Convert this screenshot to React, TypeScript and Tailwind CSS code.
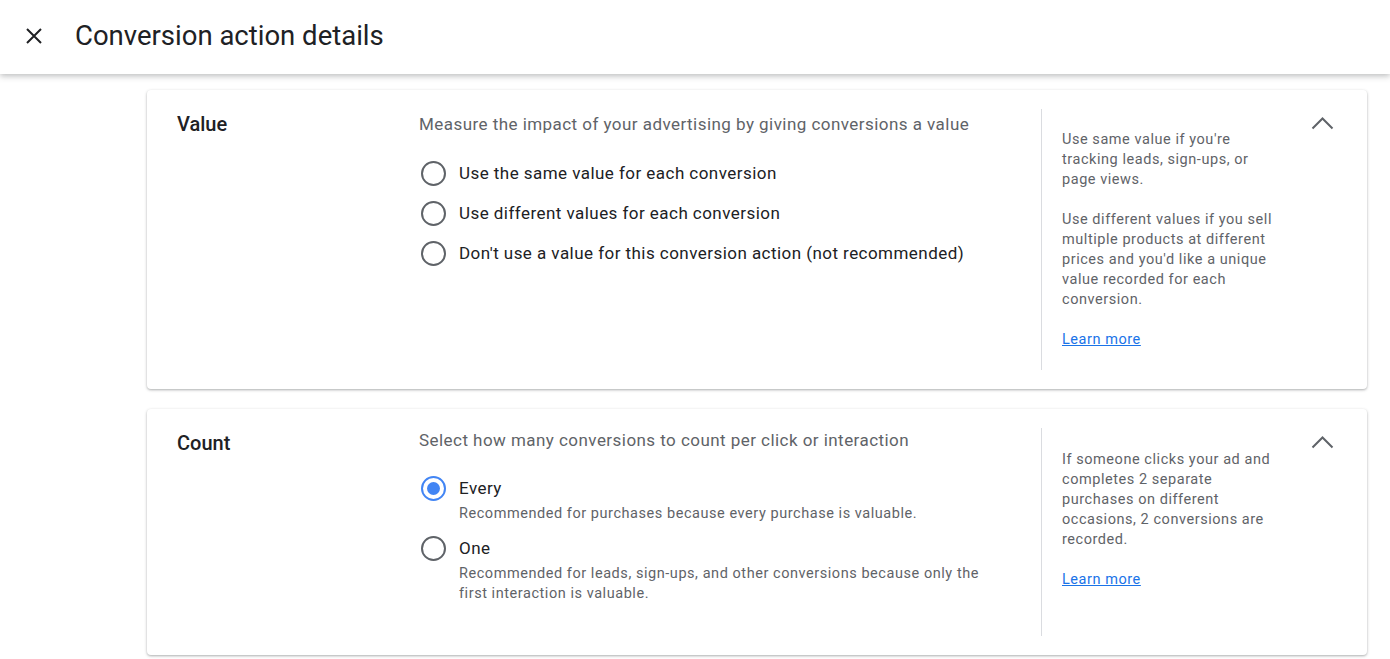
import React, { useState } from 'react';

const Radio: React.FC<{ checked?: boolean }> = ({ checked }) => (
  <span
    className={`ml-[2px] flex h-[25px] w-[25px] shrink-0 items-center justify-center rounded-full border-2 ${
      checked ? 'border-[#4285f4]' : 'border-[#5f6368]'
    }`}
  >
    {checked && <span className="h-[13px] w-[13px] rounded-full bg-[#4285f4]" />}
  </span>
);

const Chevron = () => (
  <svg width="23" height="14" viewBox="0 0 23 14" className="text-[#5f6368]">
    <path d="M1.5 12.5 11.5 2.5l10 10" fill="none" stroke="currentColor" strokeWidth="2" />
  </svg>
);

type Option = { label: string; sub?: string[] };

const Section: React.FC<{
  title: string;
  description: string;
  options: Option[];
  selected: number;
  help: string[];
  height: string;
  compact?: boolean;
}> = ({ title, description, options, selected, help, height, compact }) => {
  const [value, setValue] = useState(selected);
  return (
    <div className={`flex rounded-[4px] bg-white shadow-[0_1px_3px_rgba(60,64,67,0.3),0_1px_2px_rgba(60,64,67,0.15)] ${height}`}>
      <div className="w-[272px] shrink-0 pl-[30px] pt-[20px]">
        <h2 className="text-[20px] font-medium leading-[28px] text-[#202124]">{title}</h2>
      </div>
      <div className="min-w-0 flex-1 pt-[20px]">
        <p className={`text-[17px] leading-[24px] tracking-[0.45px] text-[#5f6368] ${compact ? '-mt-px' : 'mt-[2px]'}`}>
          {description}
        </p>
        <div className={`flex flex-col ${compact ? 'mt-[24px] gap-[12px]' : 'mt-[25px] gap-[15px]'}`}>
          {options.map((o, i) => (
            <label key={o.label} className="flex cursor-pointer items-start gap-[13px]" onClick={() => setValue(i)}>
              <Radio checked={value === i} />
              <span className="flex flex-col">
                <span className="text-[17px] leading-[24px] tracking-[0.45px] text-[#202124]">{o.label}</span>
                {o.sub && (
                  <span className="mt-[4px] text-[14.5px] leading-[20px] tracking-[0.55px] text-[#5f6368]">
                    {o.sub.map((s) => (
                      <span key={s} className="block">{s}</span>
                    ))}
                  </span>
                )}
              </span>
            </label>
          ))}
        </div>
      </div>
      <div className="my-[19px] w-px shrink-0 bg-[#dadce0]" />
      <div
        className={`w-[252px] shrink-0 pl-[20px] pr-[14px] text-[14.5px] leading-[20px] tracking-[0.55px] text-[#5f6368] ${
          compact ? 'pt-[21px]' : 'pt-[20px]'
        }`}
      >
        {help.map((h, i) => (
          <p key={i} className="mt-[20px]">
            {h}
          </p>
        ))}
        <a href="#" className="mt-[20px] block text-[#1a73e8] underline">Learn more</a>
      </div>
      <div className="w-[73px] shrink-0 pl-[17px] pt-[26px]">
        <Chevron />
      </div>
    </div>
  );
};

const App: React.FC = () => {
  return (
    <div className="min-h-screen bg-white font-['Roboto','Liberation_Sans',sans-serif]">
      <header className="relative z-10 flex h-[74px] items-center bg-white pb-[3px] shadow-[0_2px_6px_rgba(60,64,67,0.35)]">
        <button className="ml-[22px] flex h-[24px] w-[24px] items-center justify-center text-[#202124]">
          <svg width="24" height="24" viewBox="0 0 24 24">
            <path d="M5 5l14 14M19 5 5 19" stroke="currentColor" strokeWidth="2" fill="none" />
          </svg>
        </button>
        <h1 className="ml-[29px] text-[27.5px] leading-[32px] text-[#202124]">Conversion action details</h1>
      </header>
      <main className="flex flex-col gap-[20px] pl-[147px] pr-[23px] pt-[16px]">
        <Section
          title="Value"
          description="Measure the impact of your advertising by giving conversions a value"
          options={[
            { label: 'Use the same value for each conversion' },
            { label: 'Use different values for each conversion' },
            { label: "Don't use a value for this conversion action (not recommended)" },
          ]}
          selected={-1}
          help={[
            "Use same value if you're tracking leads, sign-ups, or page views.",
            "Use different values if you sell multiple products at different prices and you'd like a unique value recorded for each conversion.",
          ]}
          height="h-[299px]"
        />
        <Section
          title="Count"
          description="Select how many conversions to count per click or interaction"
          options={[
            { label: 'Every', sub: ['Recommended for purchases because every purchase is valuable.'] },
            {
              label: 'One',
              sub: [
                'Recommended for leads, sign-ups, and other conversions because only the',
                'first interaction is valuable.',
              ],
            },
          ]}
          selected={0}
          help={[
            'If someone clicks your ad and completes 2 separate purchases on different occasions, 2 conversions are recorded.',
          ]}
          height="h-[246px]"
          compact
        />
      </main>
    </div>
  );
};

export default App;
